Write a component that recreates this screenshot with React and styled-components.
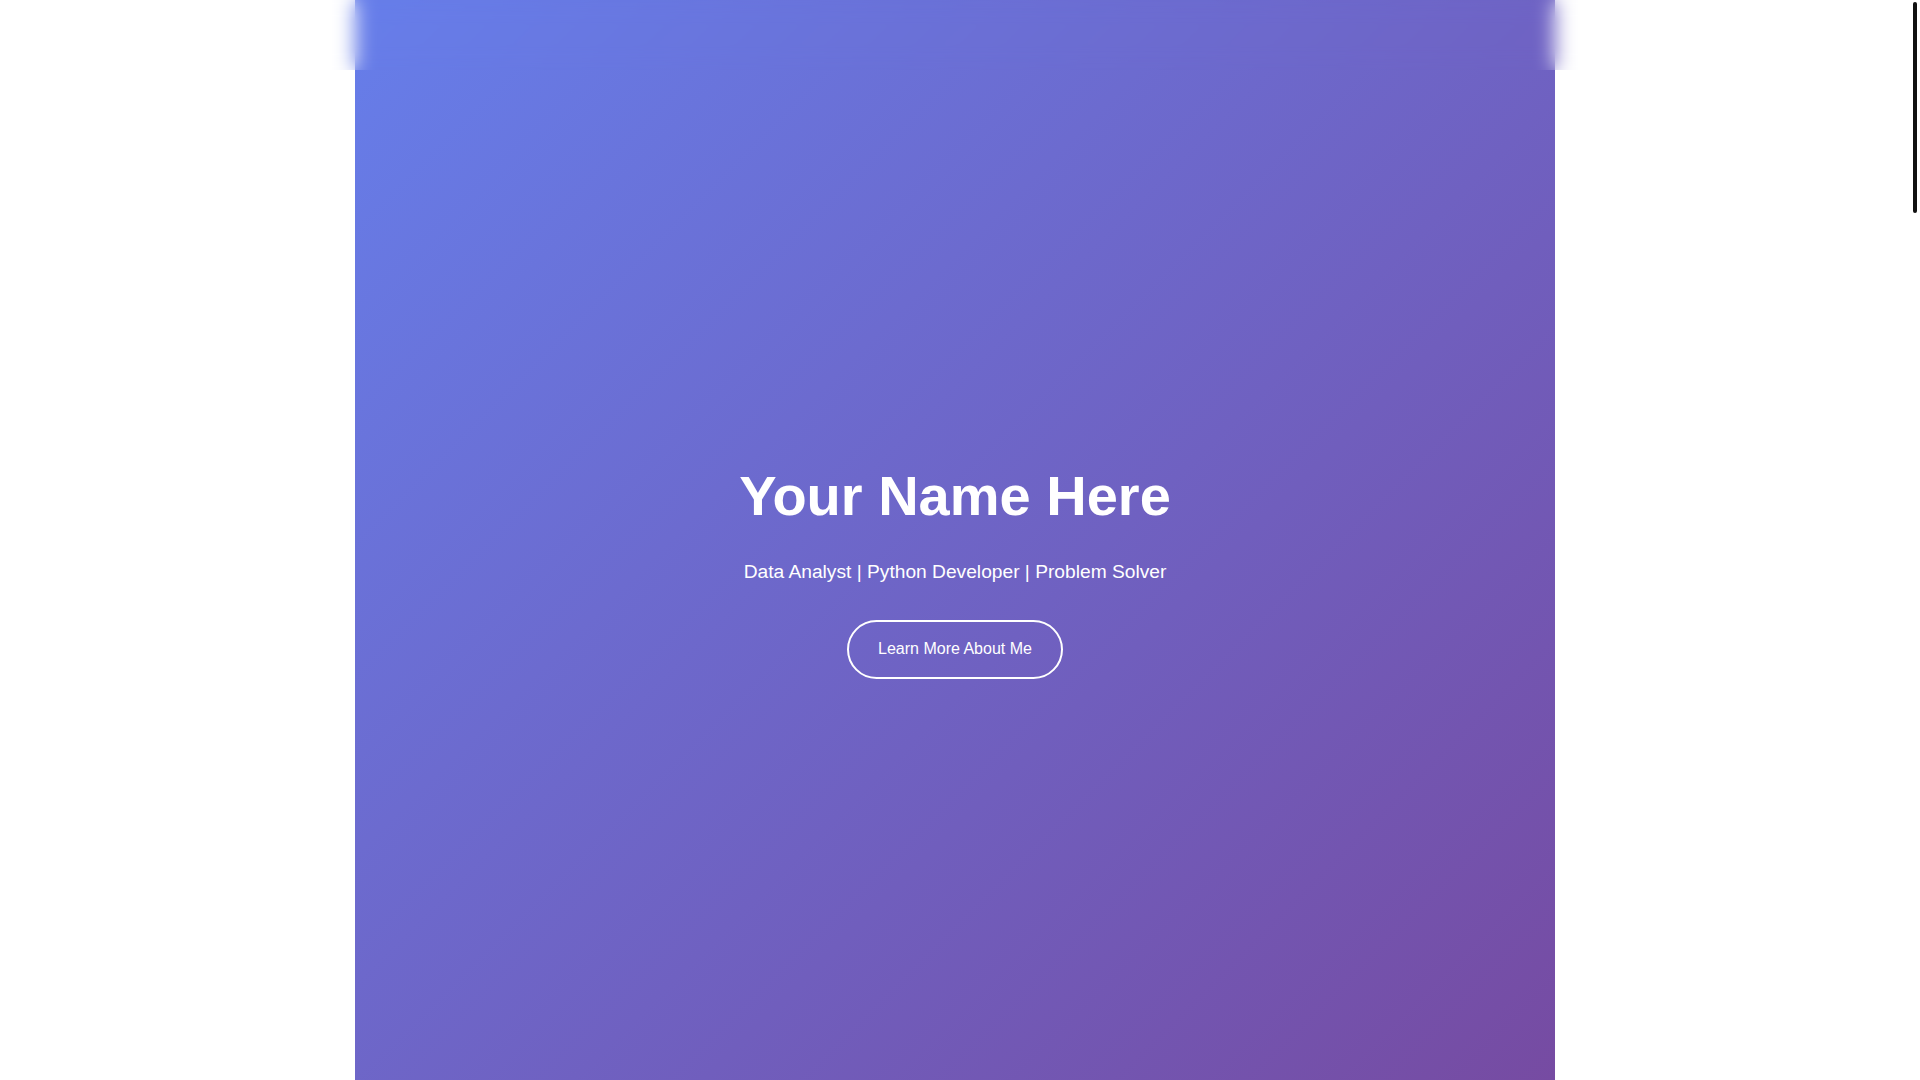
import styled, { createGlobalStyle } from "styled-components";

const GlobalStyle = createGlobalStyle`
  * {
    box-sizing: border-box;
  }

  body {
    margin: 0;
    background: #fff;
    color: #333;
    font-family: "Liberation Sans", Arial, sans-serif;
    line-height: 1.6;
  }
`;

const Page = styled.div`
  padding-right: 10px;
`;

const Header = styled.header`
  position: fixed;
  top: 0;
  left: 0;
  right: 10px;
  height: 70px;
  z-index: 10;
  background: transparent;
  backdrop-filter: blur(10px);
`;

const Nav = styled.nav`
  max-width: 1200px;
  height: 100%;
  margin: 0 auto;
`;

// stand-in for the page scrollbar, which the headless browser hides
const ScrollTrack = styled.div`
  position: fixed;
  top: 0;
  right: 0;
  width: 10px;
  height: 100vh;
  z-index: 20;
  background: #fff;
`;

const ScrollThumb = styled.div`
  width: 4px;
  height: 211px;
  margin: 2px 0 0 3px;
  border-radius: 4px;
  background: #111;
`;

const Main = styled.main`
  max-width: 1200px;
  margin: 0 auto;
`;

const Hero = styled.section`
  display: flex;
  flex-direction: column;
  align-items: center;
  justify-content: center;
  min-height: 100vh;
  padding-top: 50px;
  text-align: center;
  color: #fff;
  background: linear-gradient(135deg, #667eea 0%, #764ba2 100%);
`;

const Title = styled.h1`
  margin: 0 0 1rem;
  font-size: 3.5rem;
  font-weight: 700;
`;

const Subtitle = styled.p`
  margin: 0 0 2rem;
  font-size: 1.2rem;
`;

const CtaButton = styled.a`
  display: inline-block;
  padding: 0.92rem 1.8rem;
  border: 2px solid #fff;
  border-radius: 50px;
  color: #fff;
  font-size: 1rem;
  text-decoration: none;
  background: transparent;
`;

const App = () => {
  return (
    <Page>
      <GlobalStyle />
      <Header>
        <Nav />
      </Header>
      <ScrollTrack>
        <ScrollThumb />
      </ScrollTrack>
      <Main>
        <Hero id="home">
          <Title>Your Name Here</Title>
          <Subtitle>Data Analyst | Python Developer | Problem Solver</Subtitle>
          <CtaButton href="#about">Learn More About Me</CtaButton>
        </Hero>
      </Main>
    </Page>
  );
};

export default App;
